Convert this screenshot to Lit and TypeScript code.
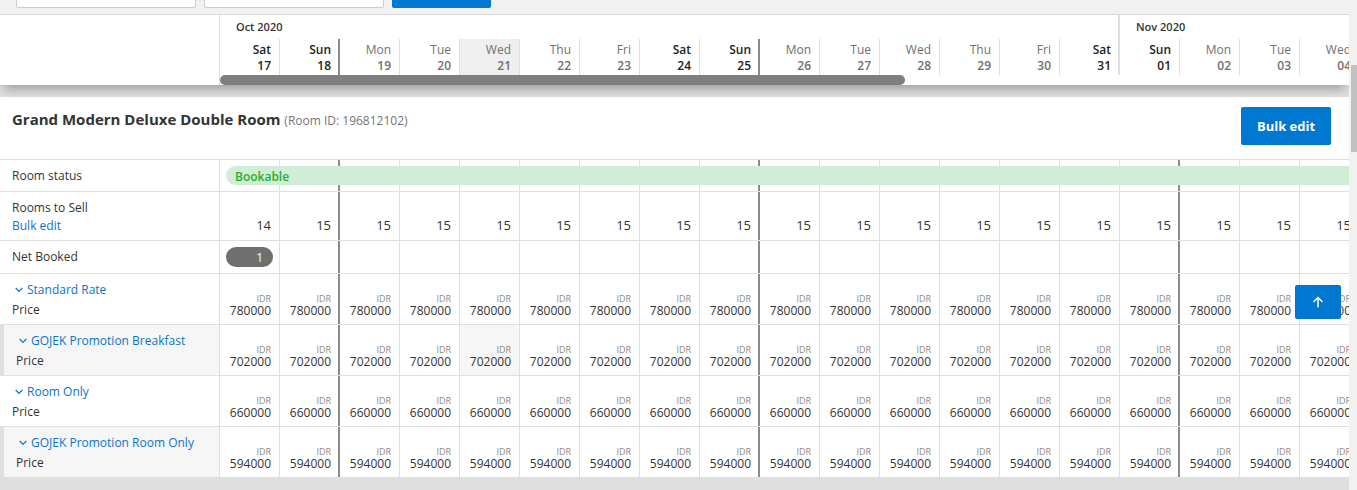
import { LitElement, html, css, nothing } from "lit";
import { customElement, state } from "lit/decorators.js";
import { classMap } from "lit/directives/class-map.js";

interface Day {
  name: string;
  date: string;
  weekend: boolean;
  today: boolean;
  weekEnd: boolean;
  monthEnd: boolean;
}

interface Rate {
  name: string;
  price: number;
  promo: boolean;
}

const NAMES = ["Sun", "Mon", "Tue", "Wed", "Thu", "Fri", "Sat"];
const FIRST = Date.UTC(2020, 9, 17);
const DAY_COUNT = 19;

const DAYS: Day[] = Array.from({ length: DAY_COUNT }, (_, i) => {
  const d = new Date(FIRST + i * 86400000);
  const next = new Date(FIRST + (i + 1) * 86400000);
  const dow = d.getUTCDay();
  return {
    name: NAMES[dow],
    date: String(d.getUTCDate()).padStart(2, "0"),
    weekend: dow === 0 || dow === 6,
    today: i === 4,
    weekEnd: dow === 0,
    monthEnd: next.getUTCDate() === 1,
  };
});

const RATES: Rate[] = [
  { name: "Standard Rate", price: 780000, promo: false },
  { name: "GOJEK Promotion Breakfast", price: 702000, promo: true },
  { name: "Room Only", price: 660000, promo: false },
  { name: "GOJEK Promotion Room Only", price: 594000, promo: true },
];

@customElement("app-root")
export class AppRoot extends LitElement {
  static styles = css`
    :host {
      display: flex;
      min-height: 100vh;
      background: #dfdfdf;
      color: #333;
      font: 12px/18px "Open Sans", "Noto Sans", sans-serif;
    }
    * {
      box-sizing: border-box;
    }
    button,
    input {
      font: inherit;
    }
    .page {
      flex: 1;
      min-width: 0;
      overflow: hidden;
    }
    .track {
      flex: none;
      width: 8px;
      padding: 65px 0 0 2px;
      background: #f1f1f1;
    }
    .thumb {
      height: 87px;
      background: #c1c1c1;
    }
    .filters {
      display: flex;
      align-items: flex-end;
      gap: 8px;
      height: 15px;
      padding: 0 16px 6px;
      background: #f1f1f1;
      border-bottom: 1px solid #d9d9d9;
    }
    .filters input {
      flex: none;
      width: 180px;
      height: 32px;
      border: 1px solid #ccc;
      border-radius: 2px;
      background: #fff;
    }
    .primary {
      flex: none;
      border: 0;
      border-radius: 2px;
      background: #0077d1;
      color: #fff;
      font-weight: 700;
      cursor: pointer;
    }
    .filters .primary {
      width: 99px;
      height: 32px;
    }
    .calendar {
      background: #fff;
      box-shadow: 0 8px 10px -4px rgba(0, 0, 0, 0.3);
    }
    table {
      table-layout: fixed;
      width: max-content;
      border-collapse: separate;
      border-spacing: 0;
    }
    .label-col {
      width: 220px;
    }
    .day-col {
      width: 60px;
    }
    th,
    td {
      padding: 0;
      font-weight: 400;
    }
    .corner,
    .label {
      border-right: 1px solid #dfdfdf;
    }
    .month {
      height: 24px;
      padding-left: 16px;
      font-size: 11px;
      font-weight: 600;
      text-align: left;
    }
    .day {
      height: 36px;
      padding: 3px 9px 0 0;
      line-height: 16px;
      text-align: right;
      vertical-align: top;
      color: #707070;
      box-shadow: inset -1px 0 #dfdfdf;
    }
    .day b {
      display: block;
      font-weight: 600;
    }
    .day.weekend {
      color: #222;
      font-weight: 600;
    }
    .day.today {
      background: #efefef;
    }
    .day.week-end {
      box-shadow: inset -2px 0 #8c8c8c;
    }
    .day.plain-end {
      box-shadow: inset -1px 0 #dfdfdf;
    }
    .day.month-end,
    .month.month-end {
      box-shadow: inset -2px 0 #dfdfdf;
    }
    .scroller {
      display: flex;
    }
    .scroller-gap {
      width: 220px;
      border-right: 1px solid #dfdfdf;
    }
    .scroller-thumb {
      width: 685px;
      height: 10px;
      border-radius: 5px;
      background: #7f7f7f;
    }
    .room {
      margin-top: 12px;
    }
    .room-head,
    .grid {
      background: #fff;
    }
    .room-head {
      display: flex;
      align-items: flex-start;
      justify-content: space-between;
      height: 63px;
      padding: 10px 18px 0 12px;
      border-bottom: 1px solid #dfdfdf;
    }
    .room-title {
      margin: 0;
      font-size: 15px;
      line-height: 24px;
      font-weight: 700;
    }
    .room-title small {
      font-size: 12px;
      font-weight: 400;
      color: #757575;
    }
    .room-head .primary {
      width: 90px;
      height: 38px;
      font-size: 13px;
    }
    .label {
      padding: 0 12px;
      text-align: left;
    }
    .grid tr:not(:last-child) > * {
      border-bottom: 1px solid #dfdfdf;
    }
    .cell {
      padding-right: 9px;
      text-align: right;
      vertical-align: bottom;
      box-shadow: inset -1px 0 #dfdfdf;
    }
    .cell.week-end {
      box-shadow: inset -2px 0 #8c8c8c;
    }
    .status {
      height: 32px;
    }
    .status .cell {
      position: relative;
    }
    .status-bar {
      position: absolute;
      z-index: 1;
      top: 6px;
      left: 6px;
      width: calc(100% * 19);
      height: 19px;
      padding-left: 9px;
      border-radius: 10px;
      background: #d2edd5;
      color: #1eb12d;
      font-weight: 600;
      line-height: 22px;
      text-align: left;
    }
    .sell {
      height: 49px;
    }
    .sell .label {
      padding-top: 2px;
    }
    .sell .cell {
      padding-bottom: 6px;
      font-size: 13px;
    }
    .booked {
      height: 33px;
    }
    .booked .cell {
      padding: 0 6px;
      vertical-align: middle;
    }
    .pill {
      display: block;
      width: 47px;
      height: 20px;
      padding-right: 10px;
      border-radius: 10px;
      background: #6f6f6f;
      color: #fff;
      line-height: 22px;
    }
    a {
      color: #0b74c9;
      text-decoration: none;
    }
    .rate {
      height: 51px;
    }
    .rate:last-child {
      height: 50px;
    }
    .rate .label {
      padding-top: 7px;
      vertical-align: top;
    }
    .rate .label span {
      display: block;
      margin-top: 2px;
    }
    .rate .label a {
      display: flex;
      align-items: center;
      gap: 4px;
      padding-left: 3px;
    }
    .rate .cell {
      padding-bottom: 7px;
      line-height: 12px;
    }
    .cell small {
      display: block;
      font-size: 9px;
      line-height: 12px;
      color: #8a8a8a;
    }
    .promo .label {
      border-left: 4px solid #dfdfdf;
      background: #f6f6f6;
    }
    .cell.hover {
      background: #f6f6f6;
    }
    .to-top {
      position: fixed;
      z-index: 2;
      right: 16px;
      bottom: 171px;
      display: grid;
      place-items: center;
      width: 46px;
      height: 34px;
      padding: 0;
    }
    svg {
      display: block;
      fill: none;
      stroke: currentColor;
    }
  `;

  @state() private days = DAYS;

  private columns() {
    return html`<colgroup>
      <col class="label-col" />
      ${this.days.map(() => html`<col class="day-col" />`)}
    </colgroup>`;
  }

  private header() {
    const split = this.days.findIndex((d) => d.monthEnd) + 1;
    return html`<header class="calendar">
      <table aria-label="Dates">
        ${this.columns()}
        <thead>
          <tr>
            <td class="corner" rowspan="2"></td>
            <th class="month month-end" colspan=${split}>Oct 2020</th>
            <th class="month" colspan=${this.days.length - split}>Nov 2020</th>
          </tr>
          <tr>
            ${this.days.map(
              (d, i) => html`<th
                scope="col"
                class=${classMap({
                  day: true,
                  weekend: d.weekend,
                  today: d.today,
                  "week-end": d.weekEnd,
                  "plain-end": i === split,
                  "month-end": d.monthEnd,
                })}
              >${d.name}<b>${d.date}</b></th>`,
            )}
          </tr>
        </thead>
      </table>
      <div class="scroller">
        <div class="scroller-gap"></div>
        <div class="scroller-thumb"></div>
      </div>
    </header>`;
  }

  private cells(content: (i: number) => unknown, hover = -1) {
    return this.days.map(
      (d, i) => html`<td
        class=${classMap({ cell: true, "week-end": d.weekEnd, hover: i === hover })}
      >${content(i)}</td>`,
    );
  }

  private rateRow(rate: Rate, index: number) {
    return html`<tr class=${classMap({ rate: true, promo: rate.promo })}>
      <th class="label" scope="row">
        <a href="#">
          <svg width="8" height="8" viewBox="0 0 8 8" stroke-width="1.2" aria-hidden="true">
            <path d="M.7 2 4 5.3 7.3 2" />
          </svg>
          ${rate.name}
        </a>
        <span>Price</span>
      </th>
      ${this.cells(() => html`<small>IDR</small>${rate.price}`, index === 1 ? 4 : -1)}
    </tr>`;
  }

  render() {
    return html`
      <main class="page">
        <div class="filters">
          <input type="text" aria-label="From" />
          <input type="text" aria-label="To" />
          <button class="primary" aria-label="Show"></button>
        </div>
        ${this.header()}
        <section class="room">
          <div class="room-head">
            <h2 class="room-title">
              Grand Modern Deluxe Double Room <small>(Room ID: 196812102)</small>
            </h2>
            <button class="primary">Bulk edit</button>
          </div>
          <table class="grid" aria-label="Rates and availability">
            ${this.columns()}
            <tbody>
              <tr class="status">
                <th class="label" scope="row">Room status</th>
                ${this.cells((i) => (i === 0 ? html`<div class="status-bar">Bookable</div>` : nothing))}
              </tr>
              <tr class="sell">
                <th class="label" scope="row">Rooms to Sell<br /><a href="#">Bulk edit</a></th>
                ${this.cells((i) => (i === 0 ? 14 : 15))}
              </tr>
              <tr class="booked">
                <th class="label" scope="row">Net Booked</th>
                ${this.cells((i) => (i === 0 ? html`<span class="pill">1</span>` : nothing))}
              </tr>
              ${RATES.map((r, i) => this.rateRow(r, i))}
            </tbody>
          </table>
        </section>
        <button class="primary to-top" aria-label="Back to top">
          <svg width="12" height="12" viewBox="0 0 12 12" stroke-width="1.5" aria-hidden="true">
            <path d="M6 11.5V1.5M1.5 6 6 1.5 10.5 6" />
          </svg>
        </button>
      </main>
      <div class="track" aria-hidden="true"><div class="thumb"></div></div>
    `;
  }
}
